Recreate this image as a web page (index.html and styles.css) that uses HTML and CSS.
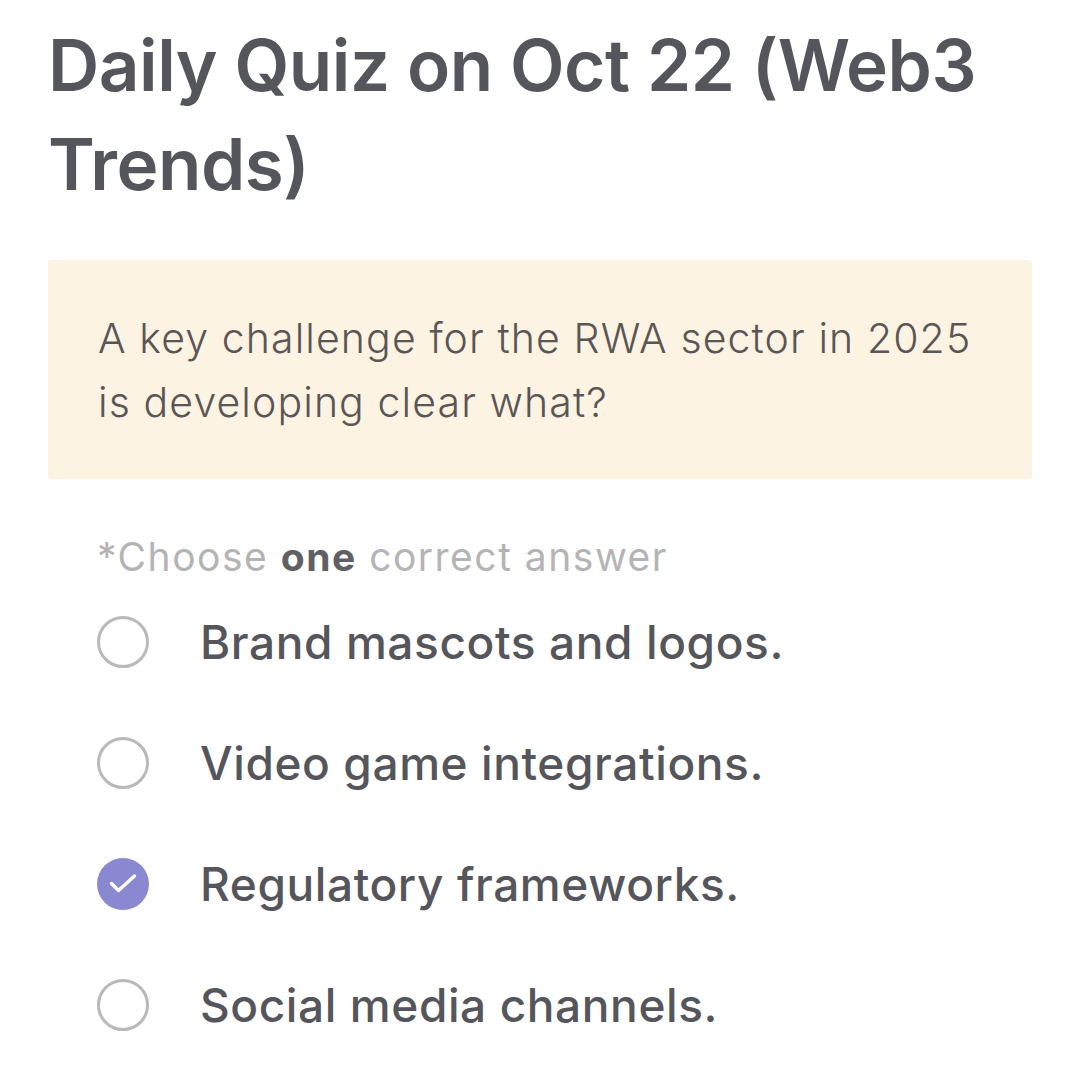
FILE: index.html
```html
<!DOCTYPE html>
<html>
<head>
<meta charset="utf-8">
<link rel="stylesheet" href="styles.css">
</head>
<body>
<main class="page">
  <h1 class="title">Daily Quiz on Oct 22 (Web3 Trends)</h1>
  <section class="question">
    <p>A key challenge for the RWA sector in 2025 is developing clear what?</p>
  </section>
  <p class="hint">*Choose <b>one</b> correct answer</p>
  <ul class="options">
    <li class="option"><span class="radio"></span><span class="label">Brand mascots and logos.</span></li>
    <li class="option"><span class="radio"></span><span class="label">Video game integrations.</span></li>
    <li class="option"><span class="radio checked"><svg viewBox="0 0 52 52" width="52" height="52"><path d="M14.5 25.5 L21.5 32.5 L37.5 18" fill="none" stroke="#fff" stroke-width="3.4" stroke-linecap="round" stroke-linejoin="round"/></svg></span><span class="label">Regulatory frameworks.</span></li>
    <li class="option"><span class="radio"></span><span class="label">Social media channels.</span></li>
  </ul>
</main>
</body>
</html>
```
FILE: styles.css
```css
html, body {
  margin: 0;
  padding: 0;
  background: #ffffff;
}
body {
  font-family: "Inter", "Liberation Sans", sans-serif;
  color: #55565b;
}
.page {
  width: 1080px;
  height: 1081px;
  overflow: hidden;
  padding: 0 48px 0 48px;
  box-sizing: border-box;
}
.title {
  margin: 0;
  padding-top: 16px;
  font-size: 71px;
  line-height: 99px;
  font-weight: 600;
  letter-spacing: -0.5px;
  color: #55565b;
}
.question {
  margin-top: 46px;
  background: #fdf3e3;
  border-radius: 4px;
  height: 219px;
  box-sizing: border-box;
  padding: 46px 40px 0 50px;
}
.question p {
  margin: 0;
  font-size: 41px;
  line-height: 64px;
  font-weight: 300;
  color: #5a5656;
  letter-spacing: 1.1px;
}
.hint {
  margin: 50px 0 0 49px;
  font-size: 39px;
  line-height: 56px;
  color: #b4b4b4;
  font-weight: 400;
  letter-spacing: 1.5px;
}
.hint b {
  color: #606064;
  font-weight: 700;
}
.options {
  list-style: none;
  margin: 31px 0 0 49px;
  padding: 0;
  display: flex;
  flex-direction: column;
  gap: 69px;
}
.option {
  display: flex;
  align-items: center;
  height: 52px;
}
.radio {
  width: 52px;
  height: 52px;
  box-sizing: border-box;
  border: 3px solid #b9b9b9;
  border-radius: 50%;
  flex: none;
  display: flex;
  align-items: center;
  justify-content: center;
}
.radio.checked {
  border: none;
  background: #8a88d0;
}
.label {
  margin-left: 51px;
  font-size: 46px;
  font-weight: 500;
  color: #55565b;
  letter-spacing: 0.6px;
}
```
